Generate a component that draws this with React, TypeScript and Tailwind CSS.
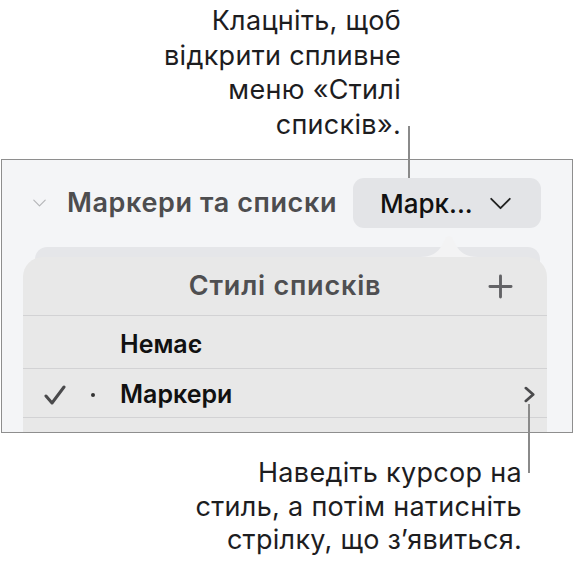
function ChevronDown({ className }: { className?: string }) {
  return (
    <svg viewBox="0 0 24 14" className={className} fill="none" stroke="currentColor" strokeWidth="2" strokeLinecap="round" strokeLinejoin="round">
      <path d="M2 2l10 10L22 2" />
    </svg>
  );
}

export default function App() {
  return (
    <div className="relative w-[575px] h-[564px] bg-white overflow-hidden text-[#1d1d1f] font-[Inter,sans-serif]">
      {/* top callout */}
      <div className="h-[159px] pt-[4px] pr-[174px] text-right text-[27px] leading-[34.5px] tracking-[0.3px]">
        Клацніть, щоб
        <br />
        відкрити спливне
        <br />
        меню «Стилі
        <br />
        списків».
      </div>
      <div className="absolute left-[408px] top-[126px] w-[2px] h-[52px] bg-[#8a8a8a]" />

      {/* inspector panel */}
      <div className="ml-[1px] w-[572px] h-[274px] border border-[#8e8e8e] bg-[#f4f5f7] overflow-hidden">
        <div className="flex items-center pt-[18px] pl-[30px] pr-[31px]">
          <ChevronDown className="w-[15px] h-[8px] text-[#b4b5b8]" />
          <div className="ml-[20px] flex-1 text-[27px] font-semibold text-[#4d4d4f] tracking-[0.6px]">
            Маркери та списки
          </div>
          <div className="w-[188px] h-[50px] rounded-[11px] bg-[#e3e4e7] flex items-center pl-[27px] gap-[16px]">
            <span className="text-[26px] font-medium text-[#111]">Марк...</span>
            <ChevronDown className="w-[23px] h-[13px] text-[#222]" />
          </div>
        </div>

        <div className="relative mt-[19px] ml-[33px] mr-[32px] h-[200px] rounded-t-[12px] bg-[#e5e6e9] pt-[10px]">
          <div className="relative -ml-[12px] -mr-[7px] h-[200px] rounded-t-[20px] bg-[#e8e8e8]">
            <div className="relative h-[58px] flex items-center justify-center">
              <span className="text-[27px] font-semibold text-[#4f4f51] tracking-[0.8px]">Стилі списків</span>
              <svg viewBox="0 0 26 26" className="absolute right-[34px] top-[17px] w-[25px] h-[25px]" stroke="#636366" strokeWidth="3" strokeLinecap="round">
                <path d="M13 2v22M2 13h22" />
              </svg>
            </div>
            <div className="h-[1px] bg-[#d2d2d4]" />
            <div className="h-[52px] flex items-center pt-[6px] pl-[97px] text-[25px] font-semibold text-[#111]">
              Немає
            </div>
            <div className="h-[1px] bg-[#d2d2d4]" />
            <div className="h-[48px] flex items-center pt-[3px] pl-[21px] text-[25px] font-semibold text-[#111]">
              <svg viewBox="0 0 22 20" className="w-[22px] h-[20px]" fill="none" stroke="#4a4a4c" strokeWidth="3" strokeLinecap="round" strokeLinejoin="round">
                <path d="M2 11l6 7L20 2" />
              </svg>
              <span className="ml-[25px] w-[4px] h-[4px] rounded-full bg-[#333]" />
              <span className="ml-[25px] flex-1">Маркери</span>
              <svg viewBox="0 0 12 18" className="mr-[12px] w-[11px] h-[17px]" fill="none" stroke="#4a4a4c" strokeWidth="3" strokeLinecap="round" strokeLinejoin="round">
                <path d="M2 2l8 7-8 7" />
              </svg>
            </div>
            <div className="h-[1px] bg-[#d2d2d4]" />
          </div>
          {/* popover arrow */}
          <svg viewBox="0 0 58 22" className="absolute left-[385px] top-[-12px] w-[58px] h-[22px]">
            <path d="M0 22 C14 22 20 16 25 4 Q29 -2 33 4 C38 16 44 22 58 22 Z" fill="#f3f3f4" />
          </svg>
        </div>
      </div>

      {/* bottom callout */}
      <div className="absolute left-[528px] top-[404px] w-[2px] h-[69px] bg-[#8a8a8a]" />
      <div className="pt-[23px] pr-[53px] text-right text-[27px] leading-[33.5px] tracking-[0.3px]">
        Наведіть курсор на
        <br />
        стиль, а потім натисніть
        <br />
        стрілку, що з’явиться.
      </div>
    </div>
  );
}
